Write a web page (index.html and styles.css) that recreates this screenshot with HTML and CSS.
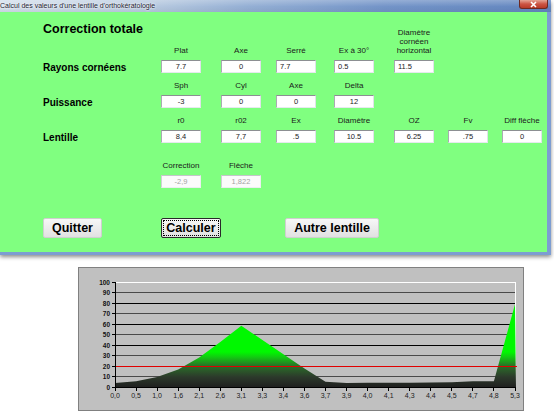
FILE: index.html
```html
<!DOCTYPE html>
<html lang="fr">
<head>
    <meta charset="UTF-8">
    <title>Calcul des valeurs d'une lentille d'orthokératologie</title>
    <link rel="stylesheet" href="styles.css">
</head>
<body>
    <!-- fenêtre du formulaire -->
    <div class="window">
        <div class="titlebar">
            <span class="title">Calcul des valeurs d'une lentille d'orthokératologie</span>
            <span class="close">
                <svg width="9" height="7" viewBox="0 0 9 7"><path d="M2 1 L7 6 M7 1 L2 6" stroke="#fff" stroke-width="1.6"/></svg>
            </span>
        </div>

        <div class="client">
            <div class="form">
                <h1 class="heading">Correction totale</h1>
                <div class="lbl">Plat</div>
                <div class="lbl">Axe</div>
                <div class="lbl">Serré</div>
                <div class="lbl">Ex à 30°</div>
                <div class="lbl">Diamètre<br>cornéen<br>horizontal</div>

                <div class="row-label">Rayons cornéens</div>
                <input class="field" type="text" value="7.7" readonly>
                <input class="field" type="text" value="0" readonly>
                <input class="field left" type="text" value="7.7" readonly>
                <input class="field left" type="text" value="0.5" readonly>
                <input class="field left" type="text" value="11.5" readonly>

                <div class="blank"></div>
                <div class="lbl">Sph</div>
                <div class="lbl">Cyl</div>
                <div class="lbl">Axe</div>
                <div class="lbl">Delta</div>

                <div class="row-label">Puissance</div>
                <input class="field" type="text" value="-3" readonly>
                <input class="field" type="text" value="0" readonly>
                <input class="field" type="text" value="0" readonly>
                <input class="field" type="text" value="12" readonly>

                <div class="blank"></div>
                <div class="lbl">r0</div>
                <div class="lbl">r02</div>
                <div class="lbl">Ex</div>
                <div class="lbl">Diamètre</div>
                <div class="lbl">OZ</div>
                <div class="lbl">Fv</div>
                <div class="lbl">Diff flèche</div>

                <div class="row-label">Lentille</div>
                <input class="field" type="text" value="8,4" readonly>
                <input class="field" type="text" value="7,7" readonly>
                <input class="field" type="text" value=".5" readonly>
                <input class="field" type="text" value="10.5" readonly>
                <input class="field" type="text" value="6.25" readonly>
                <input class="field" type="text" value=".75" readonly>
                <input class="field" type="text" value="0" readonly>

                <div class="blank"></div>
                <div class="lbl">Correction</div>
                <div class="lbl">Flèche</div>

                <div class="blank"></div>
                <input class="field off" type="text" value="-2,9" disabled>
                <input class="field off" type="text" value="1,822" disabled>

                <div class="blank"></div>

                <button class="btn btn-quit">Quitter</button>
                <button class="btn btn-calc">Calculer</button>
                <button class="btn btn-other">Autre lentille</button>
            </div>
        </div>
    </div>

    <!-- graphique -->
    <div class="chart">
        <svg width="444" height="142" viewBox="0 0 444 142">
            <defs>
                <linearGradient id="fill" gradientUnits="userSpaceOnUse" x1="0" y1="119.5" x2="0" y2="84">
                    <stop offset="0" stop-color="#1f1f1f"/>
                    <stop offset="0.3" stop-color="#2c3a2b"/>
                    <stop offset="0.6" stop-color="#2a6e28"/>
                    <stop offset="0.85" stop-color="#12c812"/>
                    <stop offset="1" stop-color="#00f800"/>
                </linearGradient>
            </defs>

            <g shape-rendering="crispEdges">
                <line x1="36" y1="24.5" x2="436" y2="24.5" stroke="#4a4a4a"/>
                <line x1="36" y1="35.5" x2="436" y2="35.5" stroke="#000"/>
                <line x1="36" y1="45.5" x2="436" y2="45.5" stroke="#4a4a4a"/>
                <line x1="36" y1="56.5" x2="436" y2="56.5" stroke="#000"/>
                <line x1="36" y1="66.5" x2="436" y2="66.5" stroke="#4a4a4a"/>
                <line x1="36" y1="77.5" x2="436" y2="77.5" stroke="#000"/>
                <line x1="36" y1="87.5" x2="436" y2="87.5" stroke="#4a4a4a"/>
                <line x1="36" y1="108.5" x2="436" y2="108.5" stroke="#4a4a4a"/>
                <line x1="36" y1="14.5" x2="436.5" y2="14.5" stroke="#fff"/>
                <line x1="436.5" y1="14" x2="436.5" y2="120" stroke="#fff"/>
            </g>

            <polygon fill="url(#fill)" points="36,119.5 36,114.9 57.1,113.2 78.1,109 99.2,101.6 120.2,89.4 141.3,74.1 162.3,57.8 183.4,72 204.4,86.3 225.5,100.5 246.5,113.7 267.6,115.1 288.6,114.8 309.7,114.8 330.7,114.8 351.8,114.4 372.8,114.2 393.9,113.2 414.9,113.2 436,36.2 437,119.5"/>

            <g shape-rendering="crispEdges">
                <line x1="36" y1="98.5" x2="438" y2="98.5" stroke="#e00000"/>
                <line x1="36" y1="119.5" x2="437" y2="119.5" stroke="#000"/>
                <line x1="36.5" y1="14" x2="36.5" y2="120" stroke="#000"/>
                <path d="M33 14.5H36 M33 24.5H36 M33 35.5H36 M33 45.5H36 M33 56.5H36 M33 66.5H36 M33 77.5H36 M33 87.5H36 M33 98.5H36 M33 108.5H36 M33 119.5H36" stroke="#000"/>
                <path d="M36.5 120V123 M57.5 120V123 M78.5 120V123 M99.5 120V123 M120.5 120V123 M141.5 120V123 M162.5 120V123 M183.5 120V123 M204.5 120V123 M225.5 120V123 M246.5 120V123 M267.5 120V123 M288.5 120V123 M309.5 120V123 M330.5 120V123 M351.5 120V123 M372.5 120V123 M393.5 120V123 M414.5 120V123 M436.5 120V123" stroke="#000"/>
            </g>

            <g class="y-labels">
                <text x="31" y="16.8">100</text>
                <text x="31" y="26.8">90</text>
                <text x="31" y="37.8">80</text>
                <text x="31" y="47.8">70</text>
                <text x="31" y="58.8">60</text>
                <text x="31" y="68.8">50</text>
                <text x="31" y="79.8">40</text>
                <text x="31" y="89.8">30</text>
                <text x="31" y="100.8">20</text>
                <text x="31" y="110.8">10</text>
                <text x="31" y="121.8">0</text>
            </g>

            <g class="x-labels">
                <text x="36" y="129.5">0,0</text>
                <text x="57.1" y="129.5">0,5</text>
                <text x="78.1" y="129.5">1,0</text>
                <text x="99.2" y="129.5">1,6</text>
                <text x="120.2" y="129.5">2,1</text>
                <text x="141.3" y="129.5">2,6</text>
                <text x="162.3" y="129.5">3,1</text>
                <text x="183.4" y="129.5">3,3</text>
                <text x="204.4" y="129.5">3,4</text>
                <text x="225.5" y="129.5">3,6</text>
                <text x="246.5" y="129.5">3,7</text>
                <text x="267.6" y="129.5">3,9</text>
                <text x="288.6" y="129.5">4,0</text>
                <text x="309.7" y="129.5">4,1</text>
                <text x="330.7" y="129.5">4,3</text>
                <text x="351.8" y="129.5">4,4</text>
                <text x="372.8" y="129.5">4,5</text>
                <text x="393.9" y="129.5">4,7</text>
                <text x="414.9" y="129.5">4,8</text>
                <text x="436" y="129.5">5,3</text>
            </g>
        </svg>
    </div>
</body>
</html>
```

FILE: styles.css
```css
* {
    margin: 0;
    padding: 0;
    box-sizing: border-box;
}

body {
    font-family: 'Liberation Sans', Arial, sans-serif;
    background: #fff;
    width: 554px;
    height: 414px;
    overflow: hidden;
}

/* fenêtre */
.window {
    width: 551px;
    box-shadow: 0 2px 4px rgba(0, 0, 0, 0.45);
}

.titlebar {
    height: 12px;
    display: flex;
    align-items: flex-start;
    background:
        linear-gradient(rgba(255, 255, 255, 0.25), rgba(255, 255, 255, 0) 55%, rgba(0, 0, 0, 0.05)),
        linear-gradient(90deg, #d3dfeb 0%, #bccde1 25%, #94afd4 45%, #7394c8 70%, #6386bf 100%);
}

.title {
    font-size: 7px;
    line-height: 12px;
    color: #1b2233;
    white-space: nowrap;
    text-shadow: 0 0 3px #fff, 0 0 2px #fff;
}

.close {
    margin-left: auto;
    margin-right: 3px;
    width: 29px;
    height: 9px;
    display: flex;
    justify-content: center;
    align-items: center;
    border: 1px solid #6e2a22;
    border-top: none;
    border-radius: 0 0 3px 3px;
    background: linear-gradient(#e5a596, #cc5443 50%, #b63a28);
}

.client {
    height: 243px;
    background: #80ff80;
    border-right: 4px solid #7d9dd1;
    border-bottom: 3px solid #7d9dd1;
    padding-top: 9.5px;
}

/* formulaire */
.form {
    display: grid;
    padding-left: 43px;
    grid-template-columns: 118px 60px 55px 58px 60px 54px 54px 45px;
    grid-template-rows: 38.5px 13px 22px 13px 22px 13px 32px 13px 30px 20px;
}

.heading {
    font-size: 12.5px;
    line-height: 15px;
    font-weight: bold;
    color: #000;
    white-space: nowrap;
    align-self: start;
    grid-column: 1;
}

.row-label,
.blank {
    grid-column: 1;
}

.row-label {
    font-size: 10px;
    line-height: 13px;
    font-weight: bold;
    color: #000;
    padding-top: 1px;
}

.lbl {
    width: 40px;
    align-self: end;
    padding-bottom: 5.5px;
    font-size: 8px;
    line-height: 9px;
    color: #1a1a1a;
    text-align: center;
    white-space: nowrap;
    display: flex;
    flex-direction: column;
    align-items: center;
}

.field {
    width: 40px;
    height: 13px;
    padding: 0;
    border: 1px solid;
    border-color: #8c8f92 #dfe3e8 #e6eaee #a9acb1;
    background: #fff;
    font-family: 'Liberation Sans', Arial, sans-serif;
    font-size: 7.5px;
    color: #222;
    text-align: center;
    outline: none;
}

.field.left {
    text-align: left;
    padding-left: 3px;
}

.field.off {
    color: #a3a3a3;
    background: #fbfbfb;
    border-color: #c4c6c9 #eceef0 #eceef0 #cfd1d4;
}

/* boutons */
.btn {
    height: 20px;
    padding: 0;
    font-family: 'Liberation Sans', Arial, sans-serif;
    font-size: 12.5px;
    font-weight: bold;
    color: #000;
    background: linear-gradient(#f7f7f7, #ececec 50%, #e1e1e1);
    border: 1px solid #cfcfcf;
    border-radius: 2px;
}

.btn-quit {
    grid-column: 1;
    width: 59px;
}

.btn-calc {
    width: 60px;
    border: 1px solid #2a2a2a;
    outline: 1px dotted #000;
    outline-offset: -3px;
}

.btn-other {
    grid-column: 4 / span 3;
    width: 94px;
    margin-left: 9px;
}

/* graphique */
.chart {
    width: 446px;
    height: 144px;
    margin: 12px 0 0 78px;
    background: #c0c0c0;
    border: 1px solid #808080;
}

.chart svg {
    display: block;
}

.y-labels text {
    font-family: 'Liberation Sans', Arial, sans-serif;
    font-size: 6.5px;
    font-weight: bold;
    fill: #111;
    text-anchor: end;
}

.x-labels text {
    font-family: 'Liberation Sans', Arial, sans-serif;
    font-size: 7px;
    fill: #222;
    text-anchor: middle;
}
```
